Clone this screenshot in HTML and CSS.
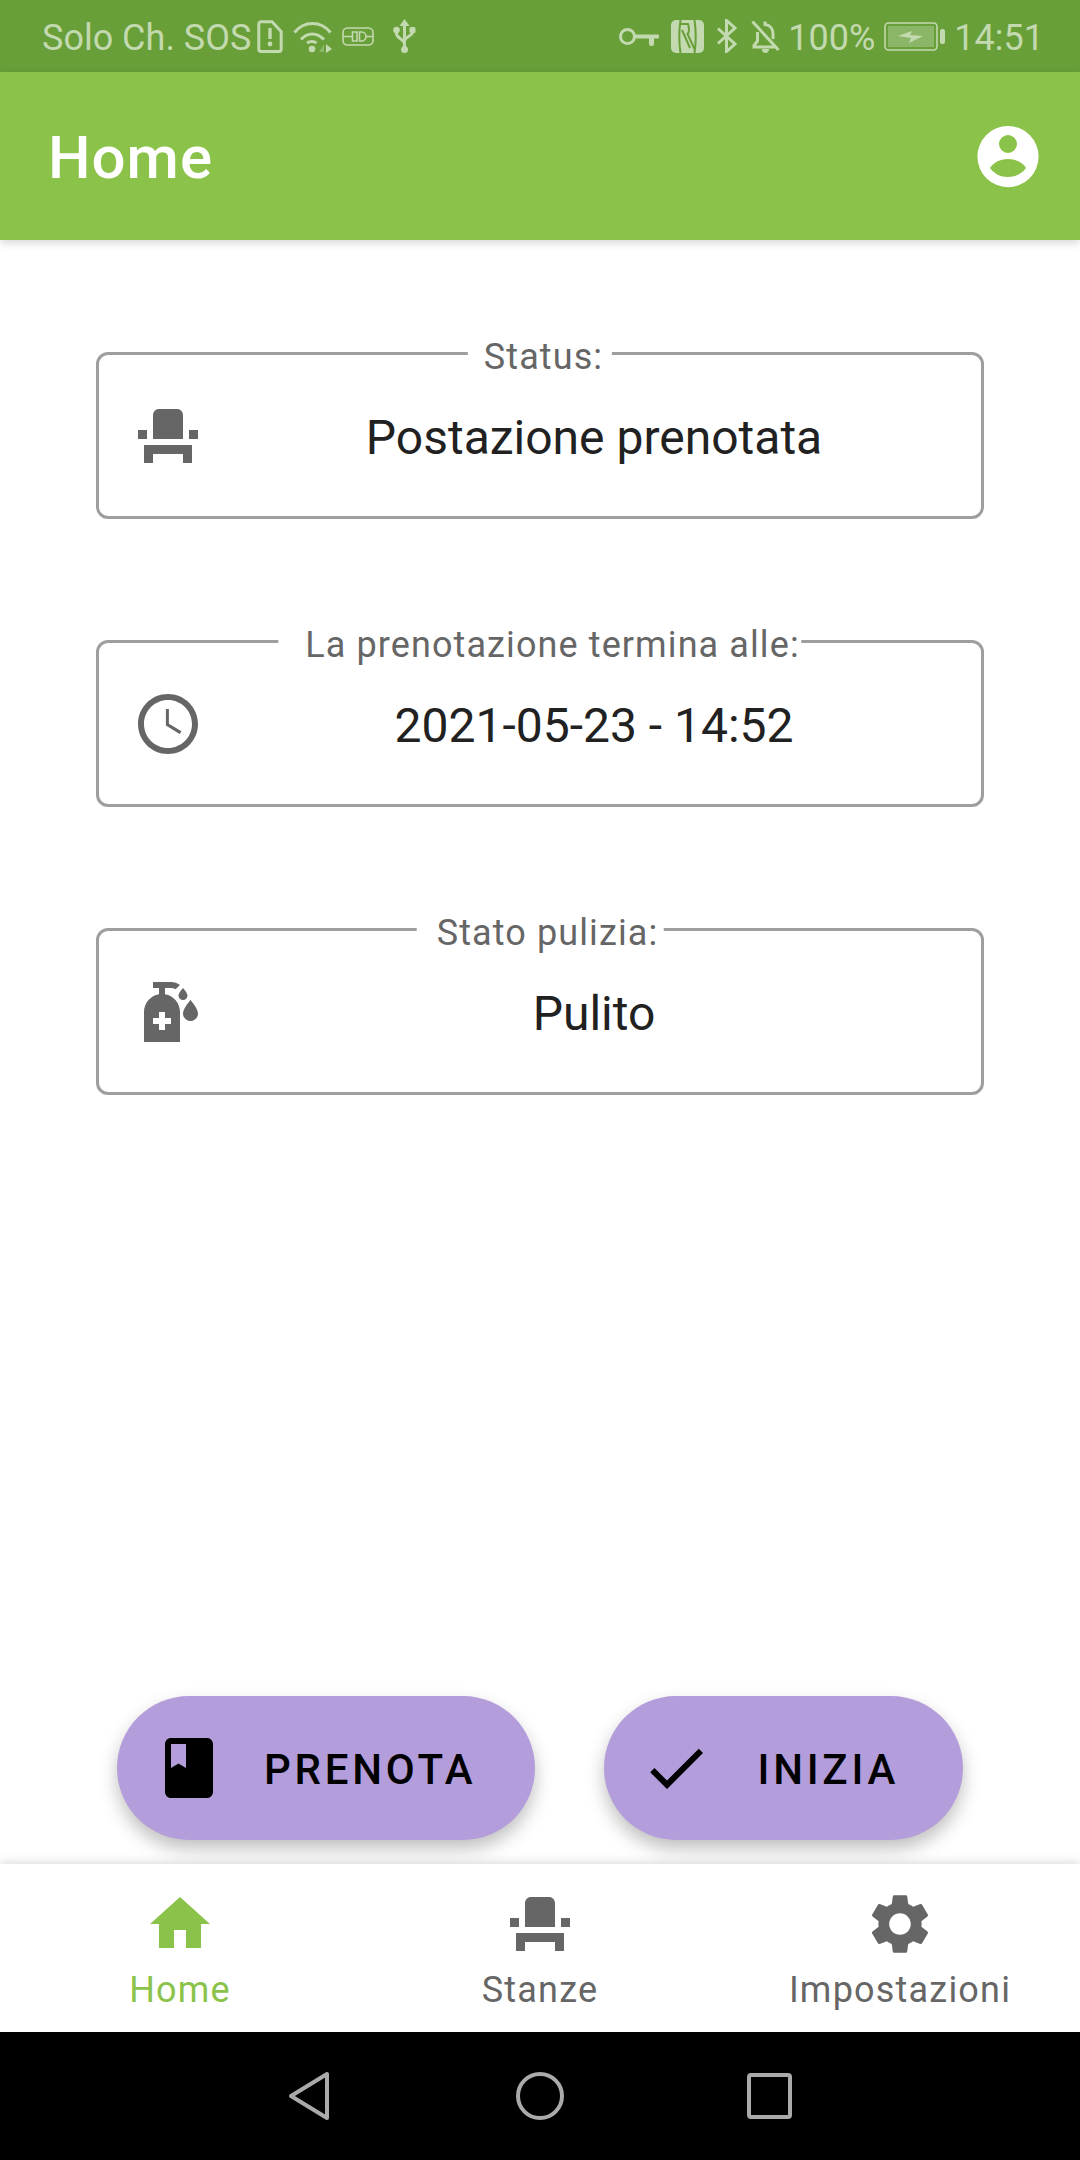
FILE: index.html
```html
<!DOCTYPE html>
<html lang="it">
<head>
    <meta charset="UTF-8">
    <meta name="viewport" content="width=device-width, initial-scale=1.0">
    <title>Home</title>
    <link rel="stylesheet" href="styles.css">
</head>
<body>
    <div class="phone">
        <!-- Status bar -->
        <div class="status-bar">
            <div class="status-group">
                <span class="carrier">Solo Ch. SOS</span>
                <svg class="sb-icon sb-sim" width="26" height="33" viewBox="0 0 26 33"><path class="sb-line" d="M4 1.800h11l9.200 9.700v17.700a2.200 2.200 0 0 1-2.200 2.200H4a2.200 2.200 0 0 1-2.200-2.200V4A2.200 2.200 0 0 1 4 1.800z" stroke-width="3.500"/><rect class="sb-fill" x="11.300" y="8" width="3.400" height="11"/><circle class="sb-fill" cx="13" cy="24" r="2.400"/></svg>
                <svg class="sb-icon" width="39" height="33" viewBox="0 0 39 33"><path class="sb-line" d="M1.500 12.500C11 .5 28 .5 37.500 12.500M8 19.500c6.500-7.500 16-7.500 23 0"/><path class="sb-line" d="M14 23c2.500-2 7-2 9.500 0" stroke-width="2"/><circle class="sb-fill" cx="19" cy="29" r="3.300"/><polygon class="sb-fill sb-dim" points="31,24 26,32 31,32"/><polygon class="sb-fill" points="33,24 39,29 33,33"/></svg>
                <svg class="sb-icon" width="32" height="19" viewBox="0 0 32 19"><rect class="sb-line sb-thin" x="1" y="1" width="30" height="17" rx="4.500"/><path class="sb-line sb-thin" d="M1 9.500h9M10.500 5h4.500v9h-4.500zM17.500 5h2a4.500 4.500 0 0 1 0 9h-2zM24 9.500h7"/></svg>
                <svg class="sb-icon sb-usb" width="23" height="34" viewBox="0 0 23 34"><polygon class="sb-fill" points="11.500,0 6.500,7 16.500,7"/><path class="sb-line" d="M11.500 6v24M3.500 12v3c0 4 8 5 8 10M19.500 12v1c0 4-8 5-8 9" stroke-width="2.500"/><circle class="sb-fill" cx="11.500" cy="30.500" r="3.500"/><circle class="sb-fill" cx="3.500" cy="11" r="3.300"/><rect class="sb-fill" x="16.500" y="8" width="6" height="6" rx="1.500"/></svg>
            </div>
            <div class="status-group status-right">
                <svg class="sb-icon" width="41" height="19" viewBox="0 0 41 19"><circle class="sb-line" cx="9.500" cy="9.500" r="7" stroke-width="4"/><rect class="sb-fill" x="16" y="7.500" width="25" height="4" rx="1"/><rect class="sb-fill" x="31" y="8" width="5" height="11" rx="2"/></svg>
                <svg class="sb-icon" width="33" height="33" viewBox="0 0 33 33"><rect class="sb-fill" width="33" height="33" rx="5"/><path class="nfc-cut" d="M9.500 0c-1.500 10-1.500 23 0 33M9.500 4H17c1.500 5 1.500 8-.5 10l7 15h0M23.500 0c1.500 10 1.500 23 0 33M11 10l8 18"/></svg>
                <svg class="sb-icon" width="21" height="34" viewBox="0 0 21 34"><path class="sb-line" d="M2 9.500l17 15.500-8.500 7.500V1.500l8.500 7.500L2 24.500"/></svg>
                <svg class="sb-icon sb-bell" width="29" height="33" viewBox="0 0 29 33"><path class="sb-line" d="M1.500 1.500l26 28.500M14 1.500v3c5 .5 8 4.500 8 9.500v5M6.500 12v9l-3.500 4.500V27h21"/><path class="sb-fill" d="M11 29h7c0 2.500-1.500 4-3.500 4S11 31.500 11 29z"/></svg>
                <span class="battery-text">100%</span>
                <svg class="sb-icon" width="61" height="29" viewBox="0 0 61 29"><rect class="sb-line sb-thin" x="1" y="1" width="52" height="27" rx="3.500"/><rect class="sb-fill sb-dim" x="4" y="4" width="46" height="21"/><polygon class="sb-fill" points="14,14 28,9 26,13 39,14 25,21 27,16"/><rect class="sb-fill" x="56" y="7" width="5" height="15" rx="2"/></svg>
                <span class="clock">14:51</span>
            </div>
        </div>

        <!-- App bar -->
        <header class="app-bar">
            <h1>Home</h1>
            <svg class="account" width="72" height="72" viewBox="0 0 24 24"><path fill-rule="evenodd" d="M12 2a10 10 0 1 0 0 20.400A10 10 0 0 0 12 2zm0 3a3 3 0 1 1 0 6 3 3 0 0 1 0-6zm0 8c-2.700 0-5 1.300-6 3 1.300 1.900 3.500 3 6 3s4.700-1.100 6-3c-1-1.700-3.300-3-6-3z"/></svg>
        </header>

        <!-- Cards -->
        <main class="content">
            <section class="card">
                <span class="card-label label-short">Status:</span>
                <svg class="icon" viewBox="0 0 24 24"><path d="M4 18v3h3v-3h10v3h3v-6H4zm15-8h3v3h-3zM2 10h3v3H2zm15 3H7V5c0-1.100.9-2 2-2h6c1.100 0 2 .9 2 2v8z"/></svg>
                <div class="card-value">Postazione prenotata</div>
            </section>

            <section class="card">
                <span class="card-label label-long">La prenotazione termina alle:</span>
                <svg class="icon" viewBox="0 0 24 24"><path d="M11.990 2C6.470 2 2 6.480 2 12s4.470 10 9.990 10C17.520 22 22 17.520 22 12S17.520 2 11.990 2zM12 20c-4.420 0-8-3.580-8-8s3.580-8 8-8 8 3.580 8 8-3.580 8-8 8z"/><path d="M12.300 7h-1v5.500l4.600 2.800.6-.9-4.200-2.500z"/></svg>
                <div class="card-value">2021-05-23 - 14:52</div>
            </section>

            <section class="card">
                <span class="card-label">Stato pulizia:</span>
                <svg class="icon" viewBox="0 0 24 24"><path fill-rule="evenodd" d="M15.500 6.500C15.500 5.660 17 4 17 4s1.500 1.660 1.500 2.500C18.500 7.330 17.830 8 17 8s-1.500-.67-1.500-1.500zM19.500 15c1.380 0 2.500-1.120 2.500-2.500 0-1.670-2.500-4.500-2.500-4.500S17 10.830 17 12.500c0 1.380 1.120 2.500 2.500 2.500zM13 14h-2v-2H9v2H7v2h2v2h2v-2h2v-2zM16 12v10H4V12c0-2.970 2.160-5.430 5-5.910V4H7V2h6c1.130 0 2.150.39 2.990 1.010l-1.440 1.440C14.010 4.170 13.510 4 13 4h-2v2.090C13.840 6.570 16 9.030 16 12z"/></svg>
                <div class="card-value">Pulito</div>
            </section>

            <div class="actions">
                <button class="pill">
                    <svg class="pill-icon" viewBox="0 0 24 24"><path d="M18 2H6c-1.100 0-2 .9-2 2v16c0 1.100.9 2 2 2h12c1.100 0 2-.9 2-2V4c0-1.100-.9-2-2-2zM6 4h5v8l-2.500-1.500L6 12V4z"/></svg>
                    <span>PRENOTA</span>
                </button>
                <button class="pill pill-start">
                    <svg class="pill-icon" viewBox="0 0 24 24"><path d="M9 16.170L4.830 12l-1.420 1.410L9 19 21 7l-1.410-1.410z"/></svg>
                    <span>INIZIA</span>
                </button>
            </div>
        </main>

        <!-- Bottom navigation -->
        <nav class="bottom-nav">
            <a class="nav-item active">
                <svg class="icon" viewBox="0 0 24 24"><path d="M10 20v-6h4v6h5v-8h3L12 3 2 12h3v8z"/></svg>
                <span>Home</span>
            </a>
            <a class="nav-item">
                <svg class="icon" viewBox="0 0 24 24"><path d="M4 18v3h3v-3h10v3h3v-6H4zm15-8h3v3h-3zM2 10h3v3H2zm15 3H7V5c0-1.100.9-2 2-2h6c1.100 0 2 .9 2 2v8z"/></svg>
                <span>Stanze</span>
            </a>
            <a class="nav-item">
                <svg class="icon" viewBox="0 0 24 24"><path d="M19.140 12.940c.04-.3.06-.61.06-.94 0-.32-.02-.64-.07-.94l2.030-1.580c.18-.14.23-.41.12-.61l-1.920-3.320c-.12-.22-.37-.29-.59-.22l-2.390.96c-.5-.38-1.030-.7-1.620-.94l-.36-2.540c-.04-.24-.24-.41-.48-.41h-3.840c-.24 0-.43.17-.47.41l-.36 2.540c-.59.24-1.130.57-1.620.94l-2.390-.96c-.22-.08-.47 0-.59.22L2.740 8.870c-.12.21-.08.47.12.61l2.030 1.580c-.05.3-.09.63-.09.94s.02.64.07.94l-2.030 1.580c-.18.14-.23.41-.12.61l1.920 3.320c.12.22.37.29.59.22l2.390-.96c.5.38 1.030.7 1.620.94l.36 2.540c.05.24.24.41.48.41h3.840c.24 0 .44-.17.47-.41l.36-2.540c.59-.24 1.130-.56 1.620-.94l2.390.96c.22.08.47 0 .59-.22l1.920-3.320c.12-.22.07-.47-.12-.61l-2.010-1.580zM12 15.600c-1.980 0-3.600-1.620-3.600-3.600s1.620-3.600 3.600-3.600 3.600 1.620 3.600 3.600-1.620 3.600-3.600 3.600z"/></svg>
                <span>Impostazioni</span>
            </a>
        </nav>

        <!-- System navigation -->
        <div class="system-nav">
            <svg class="sys-icon" width="43" height="50" viewBox="0 0 43 50"><path d="M39 3v44L3 25z"/></svg>
            <svg class="sys-icon" width="48" height="50" viewBox="0 0 48 50"><circle cx="24" cy="25" r="22"/></svg>
            <svg class="sys-icon sys-square" width="45" height="50" viewBox="0 0 45 50"><rect x="2" y="4" width="41" height="42" rx="2"/></svg>
        </div>
    </div>
</body>
</html>
```

FILE: styles.css
```css
* {
    box-sizing: border-box;
}

body {
    margin: 0;
    background: white;
    font-family: Roboto, "Liberation Sans", sans-serif;
}

.phone {
    width: 1080px;
    height: 2160px;
    display: flex;
    flex-direction: column;
    overflow: hidden;
}

/* Status bar */
.status-bar {
    height: 72px;
    flex-shrink: 0;
    background-color: #689f38;
    color: #c3d9af;
    font-size: 36px;
    display: flex;
    justify-content: space-between;
    align-items: center;
    padding: 0 36px 0 42px;
}

.status-group {
    display: flex;
    align-items: center;
    gap: 10px;
}

.status-right {
    gap: 12px;
}

.carrier, .battery-text, .clock {
    padding-top: 3px;
}

.sb-icon {
    display: block;
}

.sb-sim {
    margin-left: -4px;
}

.sb-usb {
    margin-left: 9px;
}

.sb-bell {
    margin-left: 2px;
    margin-right: -4px;
}

.battery-text {
    margin-right: -3px;
}

.clock {
    margin-left: -3px;
}

.sb-fill {
    fill: #c3d9af;
}

.sb-dim {
    opacity: 0.4;
}

.sb-line {
    fill: none;
    stroke: #c3d9af;
    stroke-width: 3;
}

.sb-thin {
    stroke-width: 1.6;
}

.nfc-cut {
    fill: none;
    stroke: #689f38;
    stroke-width: 2;
}

/* App bar */
.app-bar {
    height: 168px;
    flex-shrink: 0;
    background-color: #8bc34a;
    color: white;
    display: flex;
    justify-content: space-between;
    align-items: center;
    padding: 0 36px 0 48px;
    box-shadow: 0 3px 8px rgba(0, 0, 0, 0.16);
    position: relative;
    z-index: 2;
}

.app-bar h1 {
    margin: 0;
    padding-top: 2px;
    font-size: 60px;
    font-weight: 500;
    letter-spacing: 1px;
}

.account {
    fill: white;
}

/* Cards */
.content {
    flex: 1;
    display: flex;
    flex-direction: column;
    align-items: center;
    gap: 121px;
    padding-top: 112px;
}

.card {
    position: relative;
    width: 888px;
    height: 167px;
    border: 3px solid #9e9e9e;
    border-radius: 12px;
    display: flex;
    align-items: center;
    padding-left: 33px;
}

.card-label {
    position: absolute;
    top: -21px;
    left: 50%;
    transform: translateX(-50%);
    background: white;
    color: #666;
    font-size: 36px;
    letter-spacing: 1.1px;
    line-height: 46px;
    white-space: nowrap;
    padding: 0 5px 0 20px;
}

.label-short {
    padding: 0 9px 0 16px;
}

.label-long {
    padding: 0 2px 0 27px;
}

.icon {
    width: 72px;
    height: 72px;
    flex-shrink: 0;
    fill: #666;
}

.card-value {
    flex: 1;
    text-align: center;
    color: #212121;
    font-size: 48px;
    padding: 4px 0 0 3px;
}

/* Buttons */
.actions {
    margin-top: auto;
    align-self: flex-start;
    display: flex;
    gap: 69px;
    padding: 0 0 24px 117px;
}

.pill {
    height: 144px;
    border: none;
    border-radius: 72px;
    background-color: #b39ddb;
    color: black;
    display: flex;
    align-items: center;
    gap: 39px;
    padding: 2px 59px 0 36px;
    font-family: inherit;
    font-size: 42px;
    font-weight: 500;
    letter-spacing: 3.75px;
    box-shadow: 0 9px 18px rgba(0, 0, 0, 0.25);
}

.pill-start {
    gap: 45px;
    padding-right: 64px;
}

.pill-icon {
    width: 72px;
    height: 72px;
    flex-shrink: 0;
    margin-top: -2px;
}

/* Bottom navigation */
.bottom-nav {
    height: 168px;
    flex-shrink: 0;
    background: white;
    display: grid;
    grid-template-columns: repeat(3, 1fr);
    box-shadow: 0 -2px 9px rgba(0, 0, 0, 0.14);
    position: relative;
    z-index: 1;
}

.nav-item {
    display: flex;
    flex-direction: column;
    align-items: center;
    gap: 9px;
    padding-top: 24px;
    color: #666;
    font-size: 36px;
    letter-spacing: 1.2px;
    line-height: 42px;
}

.nav-item.active {
    color: #8bc34a;
}

.nav-item.active .icon {
    fill: #8bc34a;
}

/* System navigation */
.system-nav {
    height: 128px;
    flex-shrink: 0;
    background: black;
    display: flex;
    justify-content: center;
    align-items: center;
    gap: 185px;
    position: relative;
    z-index: 2;
}

.sys-icon {
    fill: none;
    stroke: #aaa;
    stroke-width: 4;
    stroke-linejoin: round;
}

.sys-square {
    margin-left: -2px;
}
```
